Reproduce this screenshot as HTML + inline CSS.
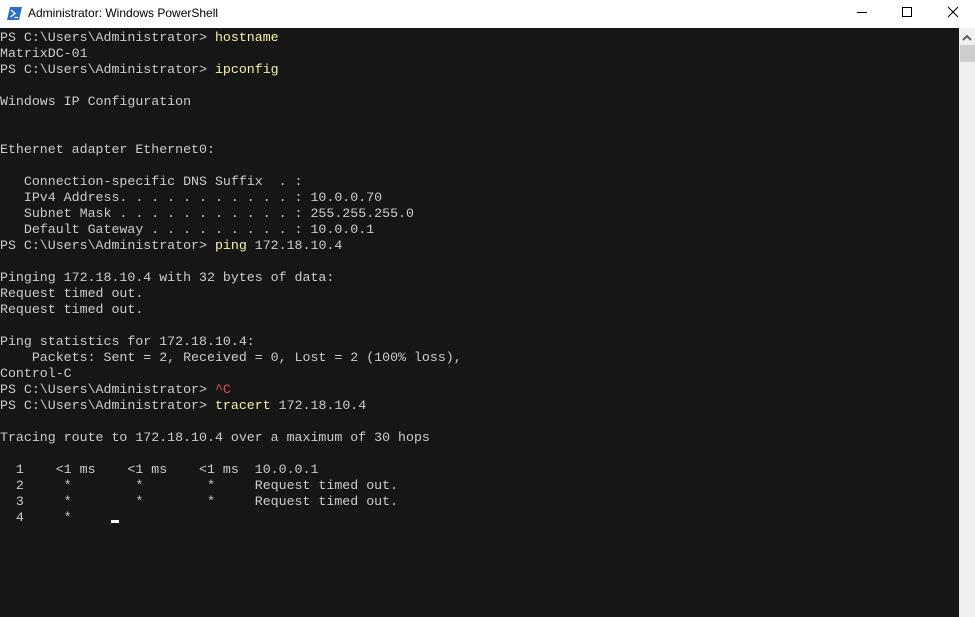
<!DOCTYPE html>
<html><head><meta charset="utf-8"><style>
html,body{margin:0;padding:0;width:975px;height:617px;overflow:hidden;background:#161616}
#tb{position:absolute;left:0;top:0;width:975px;height:28px;background:#fff}
#title{position:absolute;left:28px;top:6px;font:12px "Liberation Sans",sans-serif;color:#000}
#term{position:absolute;left:0;top:30px;width:959px;height:587px}
#bg{position:absolute;left:0;top:28px;width:959px;height:589px;background:#161616}
pre{margin:0;font-family:"Liberation Mono",monospace;font-size:13.28px;line-height:16px;color:#cccccc;white-space:pre}
.y{color:#f9f1a5}.r{color:#e74856}
#sb{position:absolute;left:959px;top:28px;width:16px;height:589px;background:#f0f0f0}
#th{position:absolute;left:960px;top:45px;width:15px;height:17px;background:#cdcdcd}
#cur{position:absolute;left:111px;top:520px;width:8px;height:3px;background:#fff}
</style></head><body>
<div id="tb">
<svg style="position:absolute;left:7px;top:7px" width="15" height="13" viewBox="0 0 15 13"><polygon points="3,0 15,0 12,13 0,13" fill="#2b6fc4"/><polyline points="4,3 8,6.5 3.5,10" stroke="#fff" stroke-width="1.4" fill="none"/><line x1="7.5" y1="10.5" x2="11" y2="10.5" stroke="#fff" stroke-width="1.3"/></svg>
<div id="title">Administrator: Windows PowerShell</div>
<svg style="position:absolute;left:840px;top:0" width="135" height="28"><line x1="17" y1="12.5" x2="27" y2="12.5" stroke="#000"/><rect x="62.5" y="7.5" width="9" height="9" fill="none" stroke="#000"/><path d="M108 7 L118 17 M118 7 L108 17" stroke="#000"/></svg>
</div>
<div id="bg"></div>
<div id="term"><pre>PS C:\Users\Administrator&gt; <span class="y">hostname</span>
MatrixDC-01
PS C:\Users\Administrator&gt; <span class="y">ipconfig</span>

Windows IP Configuration


Ethernet adapter Ethernet0:

   Connection-specific DNS Suffix  . :
   IPv4 Address. . . . . . . . . . . : 10.0.0.70
   Subnet Mask . . . . . . . . . . . : 255.255.255.0
   Default Gateway . . . . . . . . . : 10.0.0.1
PS C:\Users\Administrator&gt; <span class="y">ping</span> 172.18.10.4

Pinging 172.18.10.4 with 32 bytes of data:
Request timed out.
Request timed out.

Ping statistics for 172.18.10.4:
    Packets: Sent = 2, Received = 0, Lost = 2 (100% loss),
Control-C
PS C:\Users\Administrator&gt; <span class="r">^C</span>
PS C:\Users\Administrator&gt; <span class="y">tracert</span> 172.18.10.4

Tracing route to 172.18.10.4 over a maximum of 30 hops

  1    &lt;1 ms    &lt;1 ms    &lt;1 ms  10.0.0.1
  2     *        *        *     Request timed out.
  3     *        *        *     Request timed out.
  4     *
</pre></div>
<div id="cur"></div>
<div id="sb"><svg style="position:absolute;left:3px;top:6px" width="10" height="8"><polyline points="1,6 5,2 9,6" fill="none" stroke="#606060" stroke-width="2"/></svg></div>
<div id="th"></div>
</body></html>
